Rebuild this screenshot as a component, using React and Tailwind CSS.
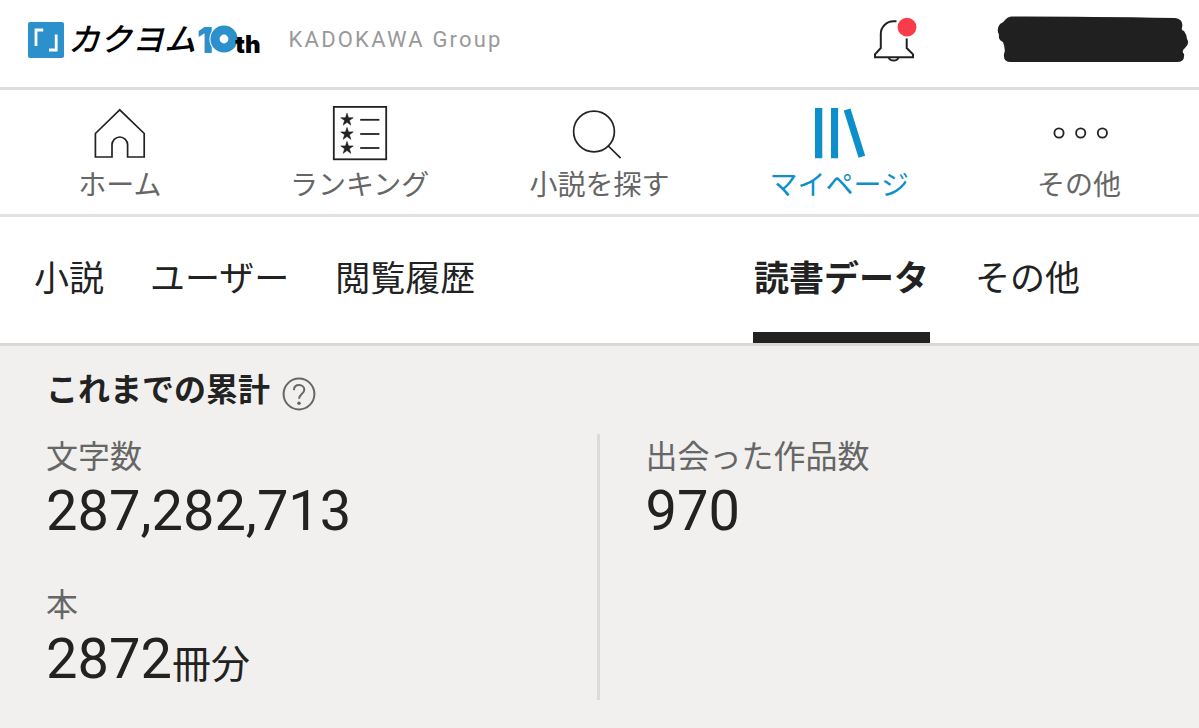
const iconClass = 'h-14 w-14 shrink-0 overflow-visible'

function HomeIcon() {
  return (
    <svg viewBox="0 0 56 56" className={iconClass} fill="none" stroke="#222" strokeWidth="1.7" aria-hidden="true">
      <path d="M27.7 4.8 3.4 28.5V52H20V39.8a7.8 7.8 0 0 1 15.6 0V52H52.2V28.5Z" />
    </svg>
  )
}

function RankingIcon() {
  const star = 'M0-6.6 1.5-2.1H6.2L2.4.7 3.8 5.3 0 2.5-3.8 5.3-2.4.7-6.2-2.1H-1.5Z'
  return (
    <svg viewBox="0 0 56 56" className={iconClass} fill="none" stroke="#222" strokeWidth="1.8" aria-hidden="true">
      <rect x="1.8" y="1.9" width="52.4" height="52.4" />
      {[14.8, 29, 43].map(y => (
        <g key={y}>
          <path d={star} transform={`translate(15 ${y})`} fill="#222" stroke="#222" strokeWidth="0.6" />
          <path d={`M28.2 ${y}H47.4`} />
        </g>
      ))}
    </svg>
  )
}

function SearchIcon() {
  return (
    <svg viewBox="0 0 56 56" className={iconClass} fill="none" stroke="#222" strokeWidth="1.7" aria-hidden="true">
      <circle cx="23" cy="26.5" r="20.4" />
      <path d="M37.3 41 49.6 53.2" />
    </svg>
  )
}

function ShelfIcon() {
  return (
    <svg viewBox="0 0 56 56" className={iconClass} fill="#0d8fcb" aria-hidden="true">
      <path d="M4 3H11.3V53.3H4ZM20 3H27.1V53.3H20ZM32.7 5.4 39.5 3.4 54.2 50.8 47.6 52.8Z" />
    </svg>
  )
}

function MoreIcon() {
  return (
    <svg viewBox="0 0 56 56" className={iconClass} fill="none" stroke="#222" strokeWidth="1.8" aria-hidden="true">
      <circle cx="8" cy="28" r="4.6" />
      <circle cx="29.7" cy="28" r="4.6" />
      <circle cx="51.4" cy="28" r="4.6" />
    </svg>
  )
}

function BellIcon() {
  return (
    <svg viewBox="0 0 44 48" className="h-12 w-11" fill="none" stroke="#222" strokeWidth="2" aria-hidden="true">
      <path d="M23.5 5.3H20.5A12.7 12.7 0 0 0 7.8 18V32L2 38.3V41.2H40V38.3L33.7 32V22.5" />
      <path d="M15.6 41.2a5.2 4.6 0 0 0 10 0" />
      <circle cx="34" cy="11.2" r="9.4" fill="#f93c4a" stroke="none" />
    </svg>
  )
}

function HelpIcon() {
  return (
    <svg viewBox="0 0 34 34" className="h-[34px] w-[34px]" fill="none" stroke="#666" strokeWidth="2" aria-hidden="true">
      <circle cx="17" cy="17" r="15.4" />
      <path d="M11.9 13.1c.2-3.2 2.3-5 5.2-5 3 0 5.2 1.9 5.2 4.7 0 4.3-5.2 4.3-5.2 8.9" />
      <circle cx="17" cy="26.2" r="1.8" fill="#666" stroke="none" />
    </svg>
  )
}

function Logo() {
  return (
    <a href="#top" className="flex items-center whitespace-nowrap">
      <svg viewBox="0 0 36 36" className="h-9 w-9" aria-hidden="true">
        <rect width="36" height="36" rx="2" fill="#2b90cb" />
        <path d="M8 24V8H15.2M28.2 12.5V28H21" fill="none" stroke="#fff" strokeWidth="2.8" />
      </svg>
      <span className="ml-1 text-[32px] leading-9 font-medium italic text-black">カクヨム</span>
      {/* 10th anniversary emblem, the zero is a ring */}
      <span className="ml-px flex items-baseline pt-1.5 font-['Inter'] font-black">
        <span className="text-4xl leading-8 text-[#2b90cb]">1</span>
        <svg viewBox="0 0 30 28" className="-ml-1 h-7 w-[30px]" aria-hidden="true">
          <circle cx="15" cy="14" r="14.6" fill="#fff" />
          <circle cx="15" cy="14" r="9" fill="none" stroke="#2b90cb" strokeWidth="9.2" />
        </svg>
        <span className="-ml-1 text-2xl leading-8 text-black">th</span>
      </span>
    </a>
  )
}

const navItems = [
  { label: 'ホーム', icon: HomeIcon },
  { label: 'ランキング', icon: RankingIcon },
  { label: '小説を探す', icon: SearchIcon },
  { label: 'マイページ', icon: ShelfIcon, active: true },
  { label: 'その他', icon: MoreIcon },
]

const tabs = [
  { label: '小説' },
  { label: 'ユーザー' },
  { label: '閲覧履歴' },
  { label: '読書データ', active: true, spaced: true },
  { label: 'その他' },
]

function Stat({ label, value, unit }) {
  return (
    <div>
      <dt className="text-[32px] leading-[46px] text-[#666]">{label}</dt>
      <dd className="text-[56px] leading-[62px]">
        {value}
        {unit && <span className="text-[39px]">{unit}</span>}
      </dd>
    </div>
  )
}

export default function App() {
  return (
    <div id="top" className="min-h-screen bg-[#f1f0ee] font-['Roboto','Noto_Sans_CJK_JP',sans-serif] text-[#222]" lang="ja">
      <header className="flex h-[90px] items-center border-b-3 border-[#ddd] bg-white pr-[10px] pb-2 pl-7">
        <Logo />
        <span className="ml-7 text-[22px] tracking-widest text-[#999]">KADOKAWA Group</span>
        <button type="button" aria-label="通知" className="ml-auto">
          <BellIcon />
        </button>
        {/* account name, blacked out */}
        <svg viewBox="0 0 192 48" className="ml-20 h-12 w-48" fill="#202020" aria-hidden="true">
          <path d="M14 .5Q80 .3 178 2Q187 3 185 12Q184 14 187 15Q190 19 190 23Q193 28 188 32Q184 35 187 38Q188 46 180 46H14Q6 46 7 38Q9 34 6 26Q1 24 2 19Q-1 13 3 8Q7 6 8 4Q10 1 14 .5Z" />
        </svg>
      </header>

      <nav className="grid grid-cols-5 border-b-3 border-[#e2e2e2] bg-white pt-[15px] pb-1">
        {navItems.map(({ label, icon: Icon, active }) => (
          <a
            key={label}
            href="#top"
            aria-current={active ? 'page' : undefined}
            className={`flex flex-col items-center text-[28px] leading-[49px] whitespace-nowrap ${active ? 'text-[#0d8fcb]' : 'text-[#666]'}`}
          >
            <Icon />
            {label}
          </a>
        ))}
      </nav>

      <nav className="flex gap-11 border-b-3 border-[#d9d8d6] bg-white pr-[118px] pl-[33px]">
        {tabs.map(({ label, active, spaced }) => (
          <a
            key={label}
            href="#top"
            aria-current={active ? 'page' : undefined}
            className={`border-b-11 px-px pt-9 pb-[25px] text-[35px] leading-[54px] whitespace-nowrap ${active ? 'border-[#222] font-bold' : 'border-transparent'} ${spaced ? 'ml-auto' : ''}`}
          >
            {label}
          </a>
        ))}
      </nav>

      <main className="pt-5">
        <div className="flex items-center gap-3 px-[46px]">
          <h1 className="text-[32px] leading-[48px] font-bold">これまでの累計</h1>
          <button type="button" aria-label="ヘルプ" className="pt-2">
            <HelpIcon />
          </button>
        </div>
        <dl className="mt-5 grid grid-cols-2">
          <div className="flex flex-col gap-10 border-r-3 border-[#dcdbd9] pb-1 pl-[46px]">
            <Stat label="文字数" value="287,282,713" />
            <Stat label="本" value="2872" unit="冊分" />
          </div>
          <div className="pl-[46px]">
            <Stat label="出会った作品数" value="970" />
          </div>
        </dl>
      </main>
    </div>
  )
}
